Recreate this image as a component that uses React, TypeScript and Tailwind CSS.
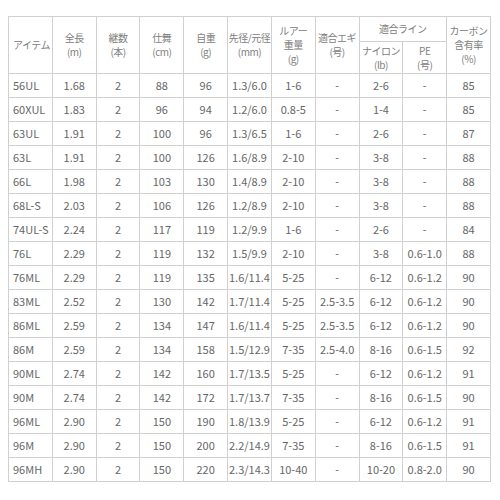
const rows: string[][] = [
  ['56UL', '1.68', '2', '88', '96', '1.3/6.0', '1-6', '-', '2-6', '-', '85'],
  ['60XUL', '1.83', '2', '96', '94', '1.2/6.0', '0.8-5', '-', '1-4', '-', '85'],
  ['63UL', '1.91', '2', '100', '96', '1.3/6.5', '1-6', '-', '2-6', '-', '87'],
  ['63L', '1.91', '2', '100', '126', '1.6/8.9', '2-10', '-', '3-8', '-', '88'],
  ['66L', '1.98', '2', '103', '130', '1.4/8.9', '2-10', '-', '3-8', '-', '88'],
  ['68L-S', '2.03', '2', '106', '126', '1.2/8.9', '2-10', '-', '3-8', '-', '88'],
  ['74UL-S', '2.24', '2', '117', '119', '1.2/9.9', '1-6', '-', '2-6', '-', '84'],
  ['76L', '2.29', '2', '119', '132', '1.5/9.9', '2-10', '-', '3-8', '0.6-1.0', '88'],
  ['76ML', '2.29', '2', '119', '135', '1.6/11.4', '5-25', '-', '6-12', '0.6-1.2', '90'],
  ['83ML', '2.52', '2', '130', '142', '1.7/11.4', '5-25', '2.5-3.5', '6-12', '0.6-1.2', '90'],
  ['86ML', '2.59', '2', '134', '147', '1.6/11.4', '5-25', '2.5-3.5', '6-12', '0.6-1.2', '90'],
  ['86M', '2.59', '2', '134', '158', '1.5/12.9', '7-35', '2.5-4.0', '8-16', '0.6-1.5', '92'],
  ['90ML', '2.74', '2', '142', '160', '1.7/13.5', '5-25', '-', '6-12', '0.6-1.2', '91'],
  ['90M', '2.74', '2', '142', '172', '1.7/13.7', '7-35', '-', '8-16', '0.6-1.5', '90'],
  ['96ML', '2.90', '2', '150', '190', '1.8/13.9', '5-25', '-', '6-12', '0.6-1.2', '91'],
  ['96M', '2.90', '2', '150', '200', '2.2/14.9', '7-35', '-', '8-16', '0.6-1.5', '91'],
  ['96MH', '2.90', '2', '150', '220', '2.3/14.3', '10-40', '-', '10-20', '0.8-2.0', '90'],
]

const cell = 'border border-[#d0d0d0] p-0 align-middle overflow-hidden whitespace-nowrap'
const head = `${cell} font-normal text-center text-[10px] leading-[14px] tracking-[-0.5px]`

export default function App() {
  return (
    <div
      className="w-[500px] h-[500px] bg-white pt-4 pl-2 text-[#666] text-[11px] leading-[13px]"
      style={{ fontFamily: '"Noto Sans CJK JP", "Noto Sans", sans-serif' }}
    >
      <table className="w-[483px] table-fixed border-collapse">
        <thead className="text-[#808080]">
          <tr className="h-[25px]">
            <th rowSpan={2} className={`${head} !text-left pl-1`}>アイテム</th>
            <th rowSpan={2} className={head}>全長<br />(m)</th>
            <th rowSpan={2} className={head}>継数<br />(本)</th>
            <th rowSpan={2} className={head}>仕舞<br />(cm)</th>
            <th rowSpan={2} className={head}>自重<br />(g)</th>
            <th rowSpan={2} className={head}>先径/元径<br />(mm)</th>
            <th rowSpan={2} className={head}>ルアー<br />重量<br />(g)</th>
            <th rowSpan={2} className={head}>適合エギ<br />(号)</th>
            <th colSpan={2} className={head}>適合ライン</th>
            <th rowSpan={2} className={head}>カーボン<br />含有率<br />(%)</th>
          </tr>
          <tr className="h-[32px]">
            <th className={head}>ナイロン<br />(lb)</th>
            <th className={head}>PE<br />(号)</th>
          </tr>
        </thead>
        <tbody>
          {rows.map((r) => (
            <tr key={r[0]} className="h-[24px]">
              {r.map((v, i) => (
                <td
                  key={i}
                  className={`${cell} ${i === 0 ? 'text-left pl-1' : 'text-center'}`}
                >
                  {v}
                </td>
              ))}
            </tr>
          ))}
        </tbody>
      </table>
    </div>
  )
}
